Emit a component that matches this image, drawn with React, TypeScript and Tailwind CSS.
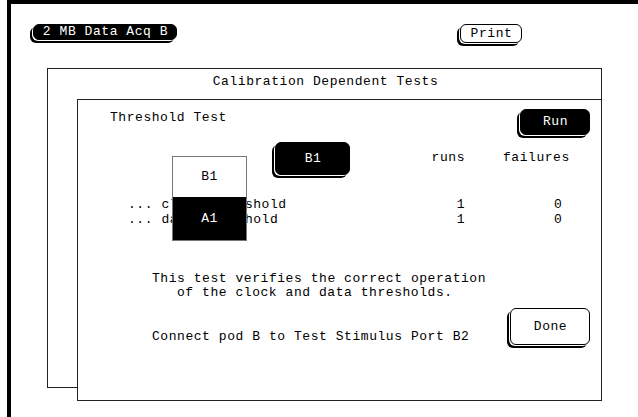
import React from "react";

function Btn({
  dark,
  className,
  children,
}: {
  dark?: boolean;
  className: string;
  children: React.ReactNode;
}) {
  const base = dark ? "bg-black text-white" : "bg-white text-black";
  return (
    <div
      className={`${base} ${className} shrink-0 border border-black rounded-[6px] flex items-center justify-center shadow-[-1px_1px_0_0_#fff,-3px_3px_0_0_#000]`}
    >
      <span className="pl-[1px]">{children}</span>
    </div>
  );
}

export default function App() {
  return (
    <div className="w-[638px] h-[417px] bg-white overflow-hidden font-['Liberation_Mono','DejaVu_Sans_Mono',monospace] text-[13px] leading-[14px] tracking-[0.55px] text-black">
      <div className="ml-[7px] h-full border-t-4 border-l-4 border-black">
        {/* top bar */}
        <div className="flex items-start pt-[20px] h-[64px]">
          <Btn dark className="ml-[22px] w-[144px] h-[16px]">
            2 MB Data Acq B
          </Btn>
          <Btn className="ml-[283px] w-[62px] h-[19px]">Print</Btn>
        </div>

        {/* outer panel */}
        <div className="ml-[36px] w-[555px] h-[320px] border border-[#222]">
          <div className="h-[30px] flex justify-center pt-[6px] pl-[2px]">
            Calibration Dependent Tests
          </div>

          {/* inner panel */}
          <div className="relative ml-[29px] w-[525px] h-[302px] border border-[#222] bg-white">
            {/* header row */}
            <div className="flex items-start pt-[9px] pl-[32px]">
              <div className="mt-[2px]">Threshold Test</div>
              <Btn dark className="ml-auto mr-[11px] w-[70px] h-[26px]">
                Run
              </Btn>
            </div>

            {/* columns header row */}
            <div className="flex items-start mt-[7px]">
              <div className="w-[340px] shrink-0">
                <Btn dark className="ml-[197px] w-[75px] h-[33px]">
                  B1
                </Btn>
              </div>
              <div className="w-[47px] text-right mt-[9px]">runs</div>
              <div className="ml-[38px] w-[68px] mt-[9px]">failures</div>
            </div>

            {/* data rows */}
            <div className="mt-[23px] flex flex-col">
              <div className="flex h-[15px]">
                <div className="w-[340px] shrink-0 pl-[50px] whitespace-pre">
                  ... clock threshold
                </div>
                <div className="w-[47px] text-right">1</div>
                <div className="ml-[38px] w-[68px] pl-[51px]">0</div>
              </div>
              <div className="flex h-[15px]">
                <div className="w-[340px] shrink-0 pl-[50px] whitespace-pre">
                  ... data threshold
                </div>
                <div className="w-[47px] text-right">1</div>
                <div className="ml-[38px] w-[68px] pl-[51px]">0</div>
              </div>
            </div>

            {/* description */}
            <div className="mt-[44px] pl-[74px] flex flex-col">
              <div className="whitespace-pre">This test verifies the correct operation</div>
              <div className="whitespace-pre pl-[25px]">of the clock and data thresholds.</div>
            </div>

            {/* connect row */}
            <div className="flex items-start mt-[8px]">
              <div className="mt-[22px] pl-[74px] whitespace-pre">
                Connect pod B to Test Stimulus Port B2
              </div>
              <Btn className="ml-auto mr-[11px] w-[80px] h-[37px]">Done</Btn>
            </div>

            {/* dropdown popup */}
            <div className="absolute left-[94px] top-[56px] w-[75px] border border-[#777] flex flex-col z-10">
              <div className="h-[40px] bg-white flex items-center justify-center">B1</div>
              <div className="h-[43px] bg-black text-white flex items-center justify-center">
                A1
              </div>
            </div>
          </div>
        </div>
      </div>
    </div>
  );
}
